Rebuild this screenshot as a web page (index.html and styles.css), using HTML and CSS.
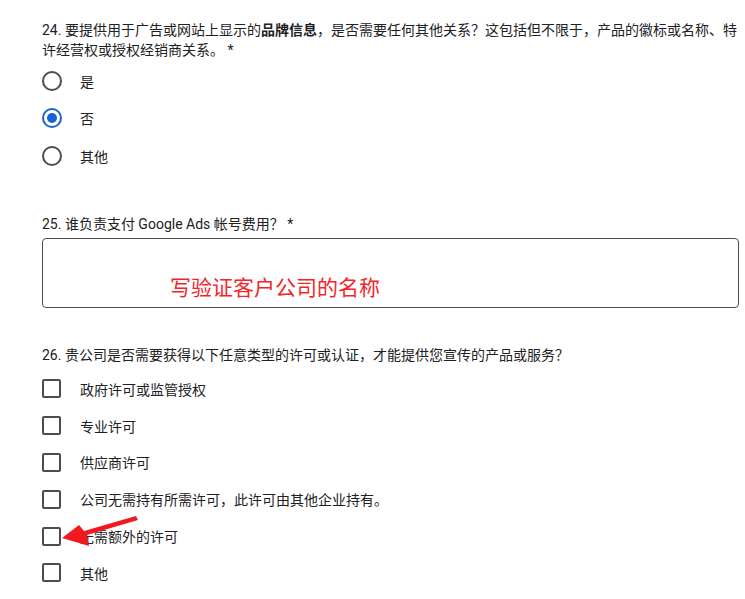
FILE: index.html
```html
<!DOCTYPE html>
<html lang="zh-CN">
<head>
    <meta charset="UTF-8">
    <title>表单</title>
    <link rel="stylesheet" href="styles.css">
</head>
<body>
    <div class="page">
        <!-- 24 -->
        <div class="question q24">
            <div class="title">24. 要提供用于广告或网站上显示的<b>品牌信息</b>，是否需要任何其他关系？这包括但不限于，产品的徽标或名称、特许经营权或授权经销商关系。 <span class="req">*</span></div>
            <div class="options radios">
                <div class="opt"><span class="radio"></span><span>是</span></div>
                <div class="opt"><span class="radio checked"></span><span>否</span></div>
                <div class="opt"><span class="radio"></span><span>其他</span></div>
            </div>
        </div>

        <!-- 25 -->
        <div class="question q25">
            <div class="title">25. 谁负责支付 Google Ads 帐号费用？ <span class="req">*</span></div>
            <div class="textbox"><span class="note">写验证客户公司的名称</span></div>
        </div>

        <!-- 26 -->
        <div class="question q26">
            <div class="title">26. 贵公司是否需要获得以下任意类型的许可或认证，才能提供您宣传的产品或服务？</div>
            <div class="options checks">
                <div class="opt"><span class="check"></span><span>政府许可或监管授权</span></div>
                <div class="opt"><span class="check"></span><span>专业许可</span></div>
                <div class="opt"><span class="check"></span><span>供应商许可</span></div>
                <div class="opt"><span class="check"></span><span>公司无需持有所需许可，此许可由其他企业持有。</span></div>
                <div class="opt"><span class="check"></span><span>无需额外的许可</span></div>
                <div class="opt"><span class="check"></span><span>其他</span></div>
            </div>
        </div>
    </div>

    <!-- 红色箭头标注 -->
    <svg class="arrow" width="745" height="599" viewBox="0 0 745 599">
        <polygon points="136,516 138,520 87,535 89,546 62,538 79,525 84,531" fill="#f0191e"/>
    </svg>
</body>
</html>
```

FILE: styles.css
```css
body { margin: 0; font-family: Roboto, "Noto Sans CJK SC", sans-serif; font-size: 14px; color: #202124; }
.page { padding: 20px 6px 0 42px; }
.title { line-height: 20px; }
.title b { font-weight: 700; }
.req { color: #202124; }
.radios { margin-top: 2px; }
.radios .opt { height: 37.5px; }
.opt { display: flex; align-items: center; }
.radio { width: 20px; height: 20px; box-sizing: border-box; border: 2px solid #4d4d4d; border-radius: 50%; margin-right: 18px; display: flex; align-items: center; justify-content: center; }
.radio.checked { border-color: #1a62d6; }
.radio.checked::after { content: ""; width: 10px; height: 10px; border-radius: 50%; background: #1a62d6; }
.q25 { margin-top: 39px; }
.textbox { margin-top: 4px; height: 70px; box-sizing: border-box; border: 1px solid #4d4d4d; border-radius: 4px; padding: 37px 0 0 127px; }
.note { color: #f2262a; font-size: 21px; line-height: 24px; }
.q26 { margin-top: 37px; }
.checks { margin-top: 6px; }
.checks .opt { height: 36.8px; }
.check { width: 19px; height: 19px; box-sizing: border-box; border: 2px solid #4d4d4d; border-radius: 2px; margin-right: 19px; }
.arrow { position: absolute; left: 0; top: 0; pointer-events: none; }
```
